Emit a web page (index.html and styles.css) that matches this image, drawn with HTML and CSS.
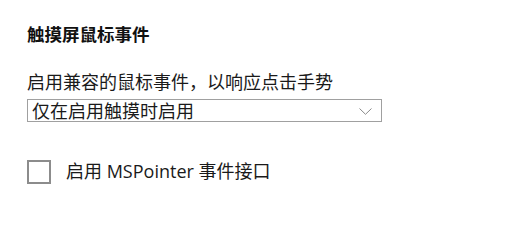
FILE: index.html
```html
<!DOCTYPE html>
<html lang="zh-CN">
<head>
<meta charset="utf-8">
<link rel="stylesheet" href="styles.css">
</head>
<body>
<div class="panel">
  <div class="heading">触摸屏鼠标事件</div>
  <div class="label">启用兼容的鼠标事件，以响应点击手势</div>
  <div class="select">
    <span class="select-text">仅在启用触摸时启用</span>
    <svg class="chevron" width="13" height="7" viewBox="0 0 13 7"><path d="M0.5 0.5 L6.5 6.3 L12.5 0.5" fill="none" stroke="#8a8a8a" stroke-width="1"/></svg>
  </div>
  <div class="check-row">
    <span class="checkbox"></span>
    <span class="check-label">启用 MSPointer 事件接口</span>
  </div>
</div>
</body>
</html>
```
FILE: styles.css
```css
html, body {
  margin: 0;
  padding: 0;
  background: #ffffff;
}
body {
  width: 514px;
  height: 216px;
  overflow: hidden;
  font-family: "Noto Sans CJK SC", "Noto Sans", sans-serif;
  color: #1a1a1a;
}
.panel {
  padding: 22px 0 0 27px;
  display: flex;
  flex-direction: column;
  align-items: flex-start;
}
.heading {
  font-size: 17.5px;
  font-weight: 700;
  line-height: 24px;
  height: 24px;
  color: #111;
}
.label {
  margin-top: 23px;
  font-size: 18px;
  line-height: 24px;
  height: 24px;
  color: #1a1a1a;
}
.select {
  margin-top: 6px;
  box-sizing: border-box;
  width: 355px;
  height: 23px;
  border: 1px solid #a0a0a0;
  display: flex;
  align-items: center;
  justify-content: space-between;
  padding: 0 9px 0 4px;
}
.select-text {
  font-size: 18px;
  line-height: 21px;
  color: #1a1a1a;
}
.chevron {
  display: block;
  margin-top: 2px;
}
.check-row {
  margin-top: 38px;
  display: flex;
  align-items: center;
  gap: 15px;
}
.checkbox {
  box-sizing: border-box;
  width: 24px;
  height: 24px;
  border: 2px solid #8c8c8c;
  background: #fff;
}
.check-label {
  font-family: "Open Sans", "Noto Sans CJK SC", sans-serif;
  font-size: 18px;
  line-height: 24px;
  color: #1a1a1a;
  margin-top: -3px;
}
```
